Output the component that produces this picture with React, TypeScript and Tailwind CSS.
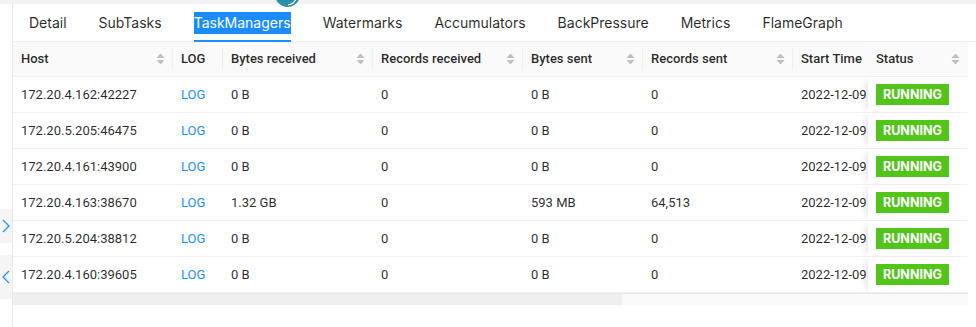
import React from 'react';

interface Row {
  host: string;
  bytesIn: string;
  recIn: string;
  bytesOut: string;
  recOut: string;
  start: string;
}

const rows: Row[] = [
  { host: '172.20.4.162:42227', bytesIn: '0 B', recIn: '0', bytesOut: '0 B', recOut: '0', start: '2022-12-09 10:21:37' },
  { host: '172.20.5.205:46475', bytesIn: '0 B', recIn: '0', bytesOut: '0 B', recOut: '0', start: '2022-12-09 10:21:37' },
  { host: '172.20.4.161:43900', bytesIn: '0 B', recIn: '0', bytesOut: '0 B', recOut: '0', start: '2022-12-09 10:21:37' },
  { host: '172.20.4.163:38670', bytesIn: '1.32 GB', recIn: '0', bytesOut: '593 MB', recOut: '64,513', start: '2022-12-09 10:21:37' },
  { host: '172.20.5.204:38812', bytesIn: '0 B', recIn: '0', bytesOut: '0 B', recOut: '0', start: '2022-12-09 10:21:37' },
  { host: '172.20.4.160:39605', bytesIn: '0 B', recIn: '0', bytesOut: '0 B', recOut: '0', start: '2022-12-09 10:21:37' },
];

const tabs = ['Detail', 'SubTasks', 'TaskManagers', 'Watermarks', 'Accumulators', 'BackPressure', 'Metrics', 'FlameGraph'];

const SortIcon = () => (
  <svg width="9" height="12" viewBox="0 0 9 12" className="shrink-0">
    <path d="M4.5 0.5 L8.5 5 L0.5 5 Z" fill="#bfbfbf" />
    <path d="M0.5 7 L8.5 7 L4.5 11.5 Z" fill="#bfbfbf" />
  </svg>
);

const Divider = () => <span className="absolute right-0 top-1/2 h-[22px] w-px -translate-y-1/2 bg-[#f0f0f0]" />;

interface HeadProps {
  label: string;
  sort?: boolean;
  divider?: boolean;
}

const Head: React.FC<HeadProps> = ({ label, sort, divider }) => (
  <th className="relative h-[35px] border-b border-[#f0f0f0] bg-[#fafafa] px-2 py-0 text-left font-medium text-[#000000d9] whitespace-nowrap overflow-hidden">
    <div className="flex items-center justify-between">
      <span>{label}</span>
      {sort && <SortIcon />}
    </div>
    {divider && <Divider />}
  </th>
);

const cell = 'h-9 border-b border-[#f0f0f0] px-2 py-0 text-[#000000d9] whitespace-nowrap overflow-hidden';

export default function App() {
  return (
    <div
      className="relative flex h-[327px] w-[976px] flex-col overflow-hidden bg-white text-[14px]"
      style={{ fontFamily: 'Inter, "Liberation Sans", sans-serif' }}
    >
      {/* floating bubble, cut off at top */}
      <div className="absolute left-[275px] top-[-18px] z-10 h-[25px] w-[25px] rounded-full bg-[#2a8fa8]">
        <svg width="25" height="25" viewBox="0 0 25 25" className="absolute inset-0">
          <path d="M13 23 Q19 22 21 17" stroke="#ffffff" strokeWidth="1.2" fill="none" />
        </svg>
      </div>

      <div className="h-1 shrink-0 bg-[#f0f2f5]" />

      <div className="flex flex-1">
        {/* left rail */}
        <div className="flex w-[13px] shrink-0 flex-col border-r border-[#e8e8e8]">
          <div className="h-[205px]" />
          <div className="flex h-[34px] items-center justify-center bg-[#f5f5f5]">
            <svg width="8" height="14" viewBox="0 0 8 14">
              <polyline points="1,1 7,7 1,13" stroke="#1890ff" strokeWidth="1.2" fill="none" />
            </svg>
          </div>
          <div className="h-3" />
          <div className="flex h-[44px] items-center justify-center bg-[#f5f5f5]">
            <svg width="8" height="14" viewBox="0 0 8 14">
              <polyline points="7,1 1,7 7,13" stroke="#1890ff" strokeWidth="1.2" fill="none" />
            </svg>
          </div>
        </div>

        {/* main panel */}
        <div className="flex flex-1 flex-col">
          {/* tabs */}
          <div className="flex h-[38px] shrink-0 items-stretch gap-8 border-b border-[#f0f0f0] pl-4 text-[#000000d9]">
            {tabs.map((t) => (
              <div key={t} className="relative flex items-center">
                {t === 'TaskManagers' ? (
                  <span className="bg-[#1a8cff] leading-[22px] text-white">{t}</span>
                ) : (
                  <span className="leading-[22px]">{t}</span>
                )}
                {t === 'TaskManagers' && <span className="absolute bottom-[-1px] left-0 right-0 h-[2px] bg-[#1890ff]" />}
              </div>
            ))}
          </div>

          {/* table */}
          <div className="w-[955px] text-[13px]" style={{ fontFamily: 'Roboto, "Liberation Sans", sans-serif' }}>
            <table className="w-[955px] table-fixed border-separate border-spacing-0">
              <colgroup>
                <col className="w-[160px]" />
                <col className="w-[50px]" />
                <col className="w-[150px]" />
                <col className="w-[150px]" />
                <col className="w-[120px]" />
                <col className="w-[150px]" />
                <col className="w-[75px]" />
                <col className="w-[100px]" />
              </colgroup>
              <thead>
                <tr>
                  <Head label="Host" sort divider />
                  <Head label="LOG" divider />
                  <Head label="Bytes received" sort divider />
                  <Head label="Records received" sort divider />
                  <Head label="Bytes sent" sort divider />
                  <Head label="Records sent" sort divider />
                  <Head label="Start Time" />
                  <th className="h-[35px] border-b border-[#f0f0f0] bg-[#fafafa] px-2 py-0 text-left font-medium text-[#000000d9] shadow-[-7px_0_7px_-5px_rgba(0,0,0,0.13)]">
                    <div className="flex items-center justify-between">
                      <span>Status</span>
                      <SortIcon />
                    </div>
                  </th>
                </tr>
              </thead>
              <tbody>
                {rows.map((r) => (
                  <tr key={r.host}>
                    <td className={cell}>{r.host}</td>
                    <td className={cell}>
                      <span className="text-[#1890ff]">LOG</span>
                    </td>
                    <td className={cell}>{r.bytesIn}</td>
                    <td className={cell}>{r.recIn}</td>
                    <td className={cell}>{r.bytesOut}</td>
                    <td className={cell}>{r.recOut}</td>
                    <td className={`${cell} text-clip`}>{r.start}</td>
                    <td className={`${cell} bg-white shadow-[-7px_0_7px_-5px_rgba(0,0,0,0.13)]`}>
                      <span
                        className="inline-block bg-[#52c41a] px-[7px] text-[12.5px] font-bold leading-[21px] text-white"
                        style={{ fontFamily: 'Inter, "Liberation Sans", sans-serif' }}
                      >
                        RUNNING
                      </span>
                    </td>
                  </tr>
                ))}
              </tbody>
            </table>
            {/* horizontal scrollbar */}
            <div className="flex h-3 border-t border-[#e8e8e8] bg-[#fafafa]">
              <div className="w-[608px] bg-[#efefef]" />
              <div className="flex-1 border-l border-[#ececec]" />
            </div>
          </div>
        </div>
      </div>
    </div>
  );
}
